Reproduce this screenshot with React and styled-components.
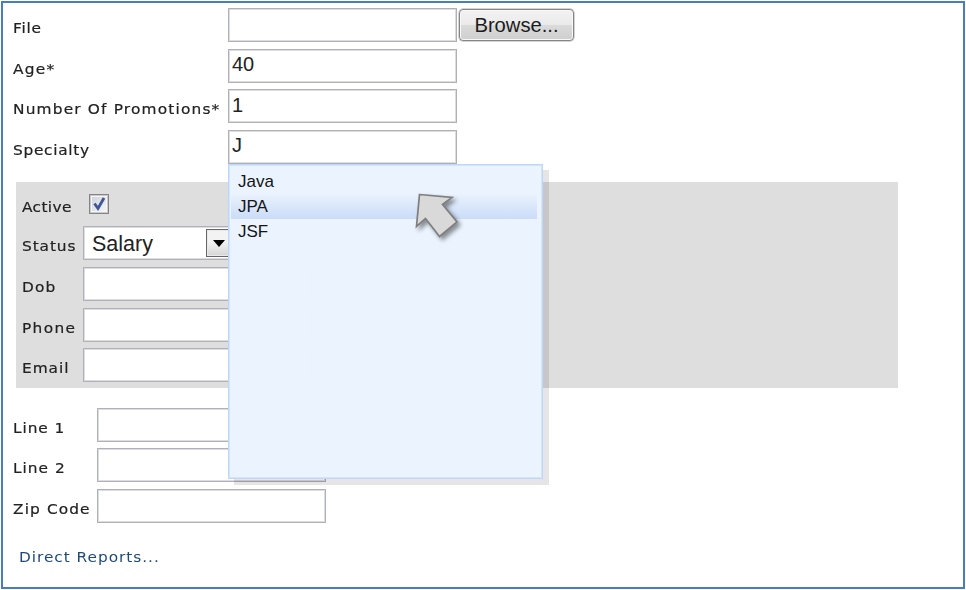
import React from "react";
import styled, { createGlobalStyle } from "styled-components";

const GlobalStyle = createGlobalStyle`
  * { box-sizing: border-box; }
  body { margin: 0; background: #fff; }
`;

const Frame = styled.main`
  position: relative;
  width: 964px;
  height: 588px;
  margin: 1px;
  padding: 5px 10px;
  border: 2px solid #4a7ebb;
  overflow: hidden;
  background: #fff;
`;

const FormGrid = styled.div`
  display: grid;
  grid-template-columns: ${(p) => p.$label}px 1fr;
  row-gap: 6.6px;
`;

const Label = styled.label`
  justify-self: start;
  height: 34px;
  padding-top: 3px;
  font: 14.5px/34px "DejaVu Sans", Verdana, sans-serif;
  letter-spacing: ${(p) => p.$spacing ?? 0.8}px;
  transform: scaleX(1.06);
  transform-origin: 0 0;
  color: #222;
  -webkit-text-stroke: 0.2px #222;
  white-space: nowrap;
`;

const Control = styled.div`
  display: flex;
  align-items: flex-start;
  gap: 2px;
`;

const TextInput = styled.input`
  width: 229px;
  height: 34px;
  padding: 0 3px 2px;
  border: 1px solid #b0b0b7;
  border-radius: 0;
  box-shadow: inset 0 0 0 1px #dcdce1;
  outline: none;
  background: #fff;
  color: #222;
  font: 20px "Liberation Sans", Arial, sans-serif;
`;

const BrowseButton = styled.button`
  width: 115px;
  height: 32px;
  margin-top: 1px;
  padding: 1px 0 0;
  border: 1.5px solid #858585;
  border-radius: 4px;
  box-shadow: inset 0 0 0 1px #f8f8f8, 0 0 0 0.5px #aaa;
  background: linear-gradient(#f2f2f2 0%, #ebebeb 48%, #dadada 52%, #cfcfcf 100%);
  color: #1c1c1c;
  font: 20.2px "Liberation Sans", Arial, sans-serif;
`;

const Panel = styled.section`
  width: 882px;
  height: 206px;
  margin: 18.7px 0 0 2.5px;
  padding: 11px 6px 0 6.5px;
  background: #dedede;
`;

const ActiveRow = styled.div`
  display: grid;
  grid-template-columns: 67px 1fr;
  height: 33px;
`;

const ActiveLabel = styled(Label)`
  padding-top: 0;
  margin-top: -3px;
`;

const CheckBox = styled.span`
  display: block;
  width: 20px;
  height: 20px;
  margin-top: 0.5px;
  border: 1px solid #858585;
  box-shadow: inset 0 0 0 1px #c9c9c9, inset 0 0 0 2px #f6f6f6;
  background: linear-gradient(135deg, #ccd1d9, #f8f8f8);
  svg { display: block; }
`;

const Select = styled.div`
  display: flex;
  justify-content: space-between;
  width: 151px;
  height: 34px;
  padding: 2px 1px 2px 8px;
  border: 1px solid #b0b0b7;
  box-shadow: inset 0 0 0 1px #dcdce1;
  background: #fff;
  color: #222;
  font: 21.5px/31px "Liberation Sans", Arial, sans-serif;
`;

const SelectArrow = styled.span`
  display: grid;
  place-items: center;
  width: 26px;
  height: 28px;
  border: 1px solid #666;
  background: linear-gradient(#f3f3f3 45%, #d5d5d5);
  box-shadow: inset 0 0 0 1px #e9e9e9;
`;

const Address = styled.section`
  margin-top: 19.3px;
`;

const ReportsLink = styled(Label).attrs({ as: "a" })`
  display: block;
  width: max-content;
  height: 24px;
  margin: 22px 0 0 6px;
  padding: 0;
  line-height: 24px;
  color: #1f497b;
  -webkit-text-stroke: 0;
`;

const Suggestions = styled.ul`
  position: absolute;
  left: 225px;
  top: 161px;
  width: 315px;
  height: 315px;
  margin: 0;
  padding: 4px 5px 0 2px;
  list-style: none;
  border: 1px solid #bdd6fb;
  background: rgba(234, 243, 254, 0.99);
  box-shadow: inset 0 0 0 1px #d2e4fe, 6px 6px 0 rgba(0, 0, 0, 0.1);
`;

const Suggestion = styled.li`
  height: 25px;
  padding-left: 7px;
  font: 17px/25px "Liberation Sans", Arial, sans-serif;
  color: #151515;
  background: ${(p) => (p.$active ? "linear-gradient(#eaf2fd, #cadcf8)" : "transparent")};
`;

const Pointer = styled.svg`
  position: absolute;
  left: 409px;
  top: 185px;
  overflow: visible;
  filter: drop-shadow(3px 3px 2px rgba(0, 0, 0, 0.42));
`;

function Field({ label, spacing, value }) {
  return (
    <>
      <Label $spacing={spacing}>{label}</Label>
      <Control>
        <TextInput defaultValue={value} aria-label={label} />
      </Control>
    </>
  );
}

export default function App() {
  return (
    <>
      <GlobalStyle />
      <Frame>
        <FormGrid $label={215}>
          <Label $spacing={0.7}>File</Label>
          <Control>
            <TextInput aria-label="File" />
            <BrowseButton>Browse...</BrowseButton>
          </Control>
          <Field label="Age*" spacing={1.2} value="40" />
          <Field label="Number Of Promotions*" spacing={1.1} value="1" />
          <Field label="Specialty" spacing={0.65} value="J" />
        </FormGrid>

        <Panel>
          <ActiveRow>
            <ActiveLabel $spacing={0.35}>Active</ActiveLabel>
            <CheckBox role="checkbox" aria-checked="true">
              <svg width="18" height="18" viewBox="0 0 18 18">
                <path d="M4.5 8.5 8 13.5 14 3" fill="none" stroke="#3e5599" strokeWidth="2.8" />
              </svg>
            </CheckBox>
          </ActiveRow>
          <FormGrid $label={61}>
            <Label $spacing={0.85}>Status</Label>
            <Select>
              Salary
              <SelectArrow>
                <svg width="12" height="7" viewBox="0 0 12 7">
                  <path d="M0 0h12L6 7z" fill="#000" />
                </svg>
              </SelectArrow>
            </Select>
            <Field label="Dob" spacing={1.1} />
            <Field label="Phone" spacing={1.25} />
            <Field label="Email" spacing={0.9} />
          </FormGrid>
        </Panel>

        <Address>
          <FormGrid $label={84}>
            <Field label="Line 1" spacing={0.85} />
            <Field label="Line 2" spacing={0.95} />
            <Field label="Zip Code" spacing={1.05} />
          </FormGrid>
        </Address>

        <ReportsLink $spacing={0.9}>Direct Reports...</ReportsLink>

        <Suggestions>
          <Suggestion>Java</Suggestion>
          <Suggestion $active>JPA</Suggestion>
          <Suggestion>JSF</Suggestion>
        </Suggestions>

        <Pointer width="50" height="50" viewBox="412 188 50 50">
          <path
            d="M419.5 194.5 452 197.5 442.5 204.5 457 222 439.5 236.5 425.5 218.5 416.5 226.5Z"
            fill="#d9d9d9"
            stroke="#7f7f7f"
            strokeWidth="1.7"
          />
        </Pointer>
      </Frame>
    </>
  );
}
